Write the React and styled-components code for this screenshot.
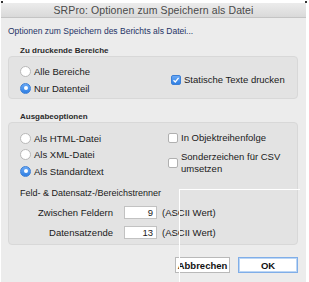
import React from 'react';
import styled, { createGlobalStyle } from 'styled-components';

const GlobalStyle = createGlobalStyle`
  html, body {
    margin: 0;
    padding: 0;
    background: #ffffff;
  }
  body {
    font-family: "Liberation Sans", Arial, sans-serif;
    -webkit-font-smoothing: antialiased;
  }
`;

const Screen = styled.div`
  position: relative;
  width: 309px;
  height: 282px;
  overflow: hidden;
  background: #ffffff;
`;

const Window = styled.div`
  margin: 3px 0 0 1px;
  width: 305px;
  height: 279px;
  background: #ececec;
  display: flex;
  flex-direction: column;
`;

const TitleBar = styled.div`
  height: 14px;
  display: flex;
  align-items: center;
  justify-content: center;
  background: linear-gradient(#ececec, #d9d9d9);
  border-bottom: 1px solid #c4c4c4;
  color: #4a4a4a;
  font-size: 10.5px;
  letter-spacing: 0.1px;
`;

const Body = styled.div`
  padding: 7px 7px 0 7px;
  display: flex;
  flex-direction: column;
`;

const Subtitle = styled.div`
  font-size: 8.5px;
  color: #1f3366;
  line-height: 12px;
`;

const GroupLabel = styled.div`
  font-size: 8px;
  font-weight: bold;
  color: #2a2a2a;
  line-height: 8px;
  padding-left: 12px;
  margin-top: ${(p) => p.$top}px;
  margin-bottom: 1px;
`;

const GroupBox = styled.div`
  width: 290px;
  height: ${(p) => p.$height}px;
  box-sizing: border-box;
  background: #e3e3e3;
  border: 1px solid #d8d8d8;
  border-radius: 4px;
  padding: ${(p) => p.$padTop}px 0 0 11px;
  display: flex;
  flex-direction: column;
`;

const Columns = styled.div`
  display: flex;
  align-items: ${(p) => p.$align || 'flex-start'};
  height: ${(p) => (p.$fill ? '100%' : 'auto')};
`;

const Column = styled.div`
  width: ${(p) => p.$width || 'auto'};
  display: flex;
  flex-direction: column;
`;

const OptionRow = styled.label`
  display: flex;
  align-items: center;
  height: ${(p) => p.$height || 16.5}px;
  font-size: 9.5px;
  color: #1a1a1a;
  gap: 3px;
`;

const RadioDot = styled.span`
  width: 11px;
  height: 11px;
  box-sizing: border-box;
  border-radius: 50%;
  flex: none;
  display: flex;
  align-items: center;
  justify-content: center;
  background: ${(p) => (p.$on ? 'linear-gradient(#6aa9f5, #2f7fe3)' : '#ffffff')};
  border: 1px solid ${(p) => (p.$on ? '#3c7fd6' : '#b8b8b8')};
  &::after {
    content: '';
    display: ${(p) => (p.$on ? 'block' : 'none')};
    width: 4px;
    height: 4px;
    border-radius: 50%;
    background: #ffffff;
  }
`;

const CheckBox = styled.span`
  width: 10px;
  height: 10px;
  box-sizing: border-box;
  border-radius: 2px;
  flex: none;
  display: flex;
  align-items: center;
  justify-content: center;
  background: ${(p) => (p.$on ? 'linear-gradient(#6aa9f5, #2f7fe3)' : '#ffffff')};
  border: 1px solid ${(p) => (p.$on ? '#3c7fd6' : '#b0b0b0')};
`;

const CheckText = styled.span`
  line-height: 12px;
`;

const FieldLabel = styled.div`
  font-size: 9px;
  color: #1a1a1a;
  line-height: 12px;
  margin: 7px 0 4px;
`;

const FieldRow = styled.div`
  display: flex;
  align-items: center;
  height: 20px;
  font-size: 9.5px;
  color: #1a1a1a;
`;

const FieldName = styled.span`
  width: 93px;
  text-align: right;
  margin-right: 11px;
`;

const NumberBox = styled.div`
  width: 33px;
  height: 13px;
  box-sizing: border-box;
  background: #ffffff;
  border: 1px solid #c2c2c2;
  text-align: right;
  padding-right: 3px;
  font-size: 9.5px;
  line-height: 11px;
  margin-right: 5px;
`;

const Footer = styled.div`
  display: flex;
  justify-content: flex-end;
  gap: 8px;
  width: 290px;
  margin-top: 12px;
`;

const Button = styled.div`
  width: ${(p) => p.$width}px;
  height: 16px;
  box-sizing: border-box;
  display: flex;
  align-items: center;
  justify-content: center;
  background: #ffffff;
  border: 1px solid ${(p) => (p.$primary ? '#80aee8' : '#b9b9b9')};
  box-shadow: ${(p) => (p.$primary ? 'inset 0 0 0 1px #bcd6f5' : 'none')};
  font-size: 9.5px;
  font-weight: bold;
  color: #111111;
`;

const GlitchLine = styled.div`
  position: absolute;
  background: #ffffff;
  left: ${(p) => p.$x}px;
  top: ${(p) => p.$y}px;
  width: ${(p) => p.$w}px;
  height: ${(p) => p.$h}px;
`;

const Corner = styled.div`
  position: absolute;
  width: 2px;
  height: 2px;
  background: #333333;
  top: 1px;
  left: ${(p) => p.$x}px;
`;

const Radio = ({ on, children }) => (
  <OptionRow>
    <RadioDot $on={on} />
    {children}
  </OptionRow>
);

const Check = ({ on, height, children }) => (
  <OptionRow $height={height}>
    <CheckBox $on={on}>
      {on && (
        <svg width="8" height="8" viewBox="0 0 8 8">
          <path d="M1.5 4.2 L3.3 6 L6.6 1.8" fill="none" stroke="#ffffff" strokeWidth="1.3" />
        </svg>
      )}
    </CheckBox>
    <CheckText>{children}</CheckText>
  </OptionRow>
);

export default function App() {
  return (
    <Screen>
      <GlobalStyle />
      <Window>
        <TitleBar>SRPro: Optionen zum Speichern als Datei</TitleBar>
        <Body>
          <Subtitle>Optionen zum Speichern des Berichts als Datei...</Subtitle>

          <GroupLabel $top={10}>Zu druckende Bereiche</GroupLabel>
          <GroupBox $height={43} $padTop={5}>
            <Columns $align="center" $fill>
              <Column $width="151px">
                <Radio>Alle Bereiche</Radio>
                <Radio on>Nur Datenteil</Radio>
              </Column>
              <Column>
                <Check on>Statische Texte drucken</Check>
              </Column>
            </Columns>
          </GroupBox>

          <GroupLabel $top={14}>Ausgabeoptionen</GroupLabel>
          <GroupBox $height={123} $padTop={7}>
            <Columns>
              <Column $width="148px">
                <Radio>Als HTML-Datei</Radio>
                <Radio>Als XML-Datei</Radio>
                <Radio on>Als Standardtext</Radio>
              </Column>
              <Column>
                <Check>In Objektreihenfolge</Check>
                <Check height={33}>
                  Sonderzeichen für CSV
                  <br />
                  umsetzen
                </Check>
              </Column>
            </Columns>
            <FieldLabel>Feld- &amp; Datensatz-/Bereichstrenner</FieldLabel>
            <FieldRow>
              <FieldName>Zwischen Feldern</FieldName>
              <NumberBox>9</NumberBox>
              (ASCII Wert)
            </FieldRow>
            <FieldRow>
              <FieldName>Datensatzende</FieldName>
              <NumberBox>13</NumberBox>
              (ASCII Wert)
            </FieldRow>
          </GroupBox>

          <Footer>
            <Button $width={55}>Abbrechen</Button>
            <Button $width={60} $primary>
              OK
            </Button>
          </Footer>
        </Body>
      </Window>
      <GlitchLine $x={179} $y={189} $w={121} $h={1} />
      <GlitchLine $x={179} $y={189} $w={1} $h={93} />
      <Corner $x={1} />
      <Corner $x={305} />
    </Screen>
  );
}
